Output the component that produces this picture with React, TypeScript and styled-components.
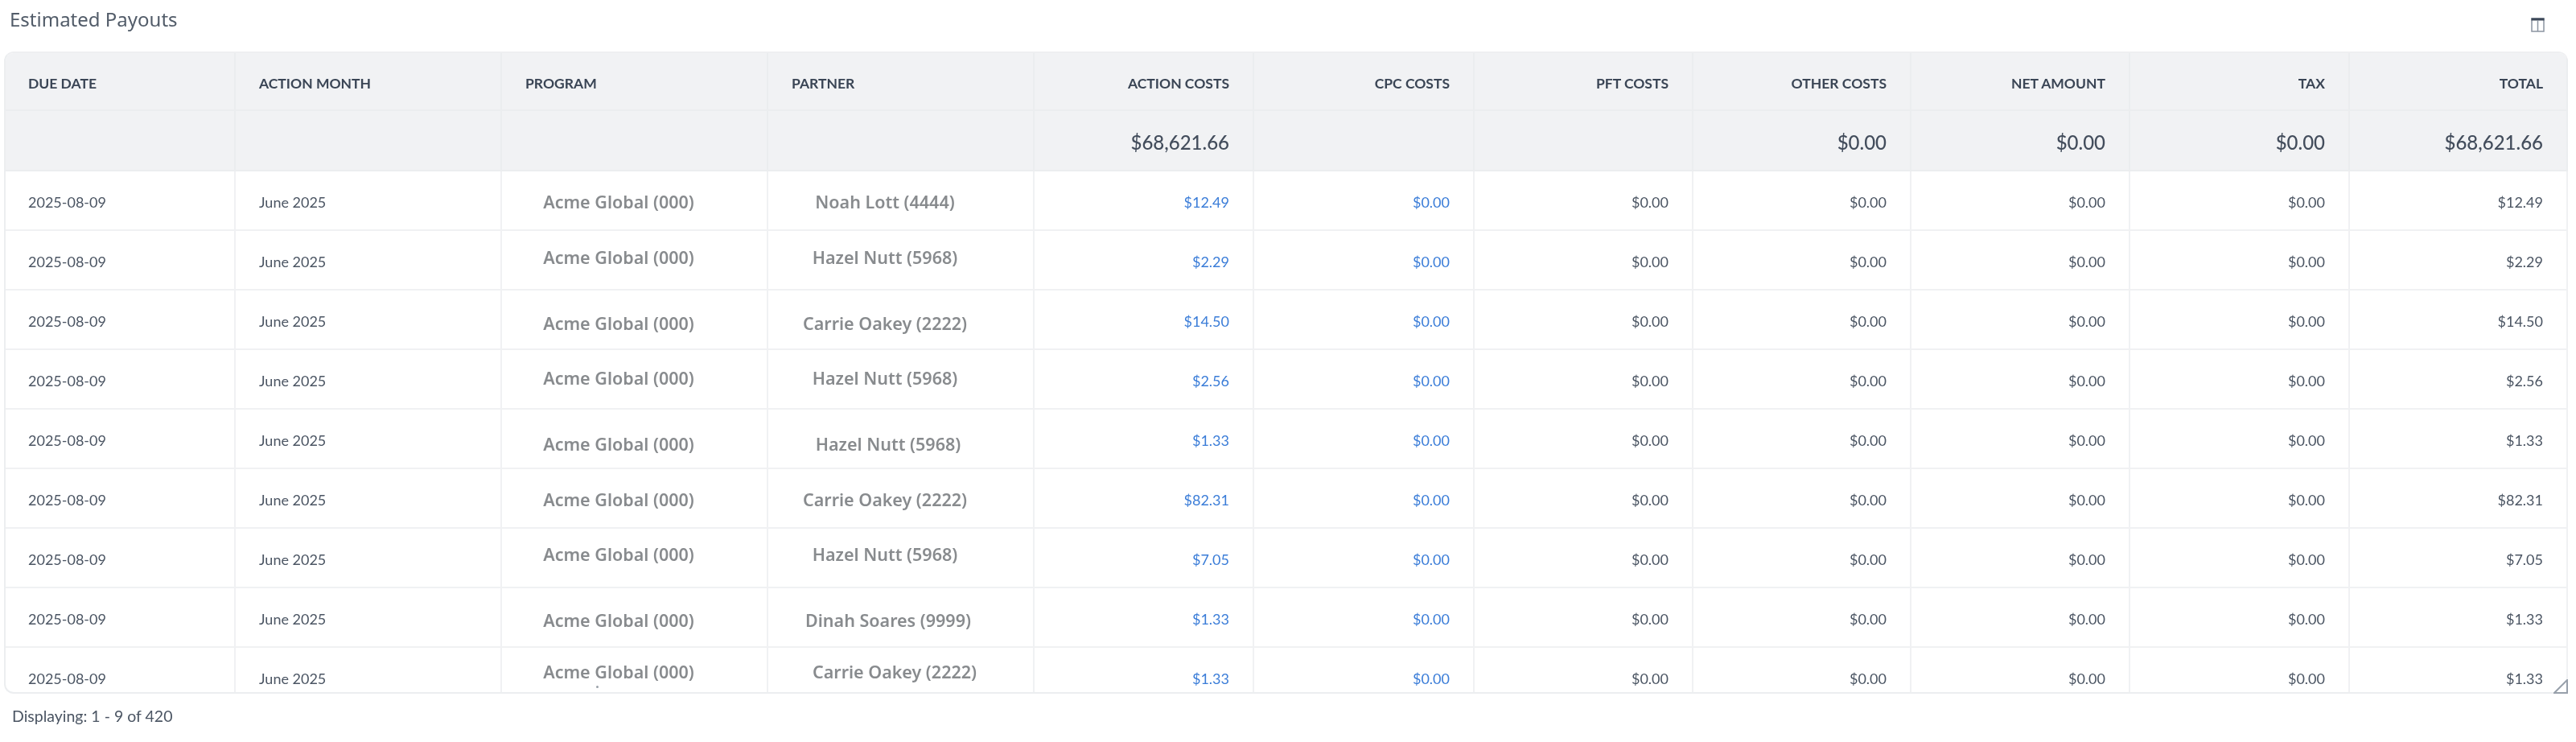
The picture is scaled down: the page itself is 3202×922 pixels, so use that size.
import styled, { createGlobalStyle } from 'styled-components'

interface Row {
  action: string
  total: string
  partner: string
  programOffset: number
  partnerOffset: number
  partnerShift?: number
}

const columns = [
  { label: 'Due Date', width: 286 },
  { label: 'Action Month', width: 331 },
  { label: 'Program', width: 331 },
  { label: 'Partner', width: 331 },
  { label: 'Action Costs', width: 273, numeric: true, sum: '$68,621.66' },
  { label: 'CPC Costs', width: 274, numeric: true },
  { label: 'PFT Costs', width: 272, numeric: true },
  { label: 'Other Costs', width: 271, numeric: true, sum: '$0.00' },
  { label: 'Net Amount', width: 272, numeric: true, sum: '$0.00' },
  { label: 'Tax', width: 273, numeric: true, sum: '$0.00' },
  { label: 'Total', width: 271, numeric: true, sum: '$68,621.66' },
]

const rows: Row[] = [
  { action: '$12.49', total: '$12.49', partner: 'Noah Lott (4444)', programOffset: 0, partnerOffset: 0 },
  { action: '$2.29', total: '$2.29', partner: 'Hazel Nutt (5968)', programOffset: -5, partnerOffset: -5 },
  { action: '$14.50', total: '$14.50', partner: 'Carrie Oakey (2222)', programOffset: 3, partnerOffset: 3 },
  { action: '$2.56', total: '$2.56', partner: 'Hazel Nutt (5968)', programOffset: -3, partnerOffset: -3 },
  { action: '$1.33', total: '$1.33', partner: 'Hazel Nutt (5968)', programOffset: 5, partnerOffset: 5, partnerShift: 4 },
  { action: '$82.31', total: '$82.31', partner: 'Carrie Oakey (2222)', programOffset: 0, partnerOffset: 0 },
  { action: '$7.05', total: '$7.05', partner: 'Hazel Nutt (5968)', programOffset: -6, partnerOffset: -6 },
  { action: '$1.33', total: '$1.33', partner: 'Dinah Soares (9999)', programOffset: 2, partnerOffset: 2, partnerShift: 4 },
  { action: '$1.33', total: '$1.33', partner: 'Carrie Oakey (2222)', programOffset: -8, partnerOffset: -8, partnerShift: 12 },
]

export default function App() {
  return (
    <Page>
      <GlobalStyle />
      <TitleBar>
        <Title>Estimated Payouts</Title>
        <ColumnsIcon width="17" height="18" viewBox="0 0 17 18">
          <rect x="1" y="1" width="15" height="16" fill="#fff" stroke="#8b94a1" strokeWidth="1.5" />
          <rect x="0.5" y="0.5" width="16" height="3" fill="#3d4859" />
          <line x1="8.5" y1="3" x2="8.5" y2="17" stroke="#8b94a1" strokeWidth="1.5" />
        </ColumnsIcon>
      </TitleBar>
      <Frame>
        <Scroller>
          <Table>
            <colgroup>
              {columns.map(({ label, width }) => (
                <col key={label} width={width} />
              ))}
            </colgroup>
            <thead>
              <tr>
                {columns.map(({ label, numeric }) => (
                  <HeadCell key={label} $numeric={numeric}>
                    {label}
                  </HeadCell>
                ))}
              </tr>
              <tr>
                {columns.map(({ label, sum }) => (
                  <SumCell key={label}>{sum}</SumCell>
                ))}
              </tr>
            </thead>
            <tbody>
              {rows.map((row, i) => (
                <tr key={i}>
                  <DataCell>2025-08-09</DataCell>
                  <DataCell>June 2025</DataCell>
                  <NameCell $offset={row.programOffset}>Acme Global (000)</NameCell>
                  <NameCell $offset={row.partnerOffset} $shift={row.partnerShift}>
                    {row.partner}
                  </NameCell>
                  <DataCell $numeric $link>
                    {row.action}
                  </DataCell>
                  <DataCell $numeric $link>
                    $0.00
                  </DataCell>
                  <DataCell $numeric>$0.00</DataCell>
                  <DataCell $numeric>$0.00</DataCell>
                  <DataCell $numeric>$0.00</DataCell>
                  <DataCell $numeric>$0.00</DataCell>
                  <DataCell $numeric>{row.total}</DataCell>
                </tr>
              ))}
            </tbody>
          </Table>
        </Scroller>
        <Speck />
        <ResizeHandle width="18" height="18" viewBox="0 0 18 18">
          <path d="M1 17 L17 1 L17 17 Z" fill="none" stroke="#98a0ab" strokeWidth="2" />
        </ResizeHandle>
      </Frame>
      <Footer>Displaying: 1 - 9 of 420</Footer>
    </Page>
  )
}

const GlobalStyle = createGlobalStyle`
  body {
    margin: 0;
    background: #fff;
    overflow: hidden;
    font-family: Lato, "Liberation Sans", sans-serif;
  }
`

const Page = styled.div`
  height: 922px;
  padding: 0 10px 0 5px;
  box-sizing: border-box;
  filter: blur(0.6px);
`

const TitleBar = styled.div`
  display: flex;
  justify-content: space-between;
  align-items: flex-start;
  height: 64px;
  padding: 7px 29px 0 7px;
  box-sizing: border-box;
`

const Title = styled.div`
  font-family: "Noto Sans", sans-serif;
  font-size: 24px;
  line-height: 34px;
  color: #525c69;
`

const ColumnsIcon = styled.svg`
  margin-top: 15px;
`

const Frame = styled.div`
  position: relative;
  height: 798px;
`

const Scroller = styled.div`
  height: 100%;
  box-sizing: border-box;
  overflow: hidden;
  border-radius: 12px 12px 0 12px;
  border-top: 2px solid #eeeff1;
  border-left: 2px solid #eceef0;
  border-bottom: 2px solid #eceef0;
`

const Table = styled.table`
  width: 3185px;
  table-layout: fixed;
  border-collapse: separate;
  border-spacing: 0;
`

const Cell = styled.td<{ $numeric?: boolean }>`
  height: 74px;
  box-sizing: border-box;
  padding: 4px 29px 0 29px;
  border-right: 2px solid #f0f1f3;
  border-bottom: 2px solid #f0f1f3;
  text-align: ${({ $numeric }) => ($numeric ? 'right' : 'left')};
  white-space: nowrap;

  &:first-child {
    padding-left: 28px;
  }
`

const HeadCell = styled(Cell).attrs({ as: 'th' })`
  height: 72px;
  background: #f1f2f4;
  border-color: #ebedef;
  color: #3a4555;
  font-size: 17.5px;
  font-weight: 700;
  text-transform: uppercase;
`

const SumCell = styled(Cell)`
  height: 75px;
  background: #f1f2f4;
  border-color: #ebedef;
  color: #434d5c;
  font-size: 24px;
  font-weight: 500;
  text-align: right;
`

const DataCell = styled(Cell)<{ $link?: boolean }>`
  color: ${({ $link }) => ($link ? '#3b7dd8' : '#4b5563')};
  font-size: 18px;
`

const NameCell = styled(Cell)<{ $offset: number; $shift?: number }>`
  padding: ${({ $offset }) => 3 + Math.max($offset, 0) * 2}px 39px
    ${({ $offset }) => Math.max(-$offset, 0) * 2}px
    ${({ $shift = 0 }) => $shift * 2}px;
  text-align: center;
  font-family: "Noto Sans", sans-serif;
  font-size: 21.5px;
  font-weight: 600;
  color: #888b8e;
`

const Speck = styled.span`
  position: absolute;
  left: 736px;
  top: 788px;
  width: 3px;
  height: 3px;
  border-radius: 50%;
  background: #9aa0a8;
`

const ResizeHandle = styled.svg`
  position: absolute;
  right: 0;
  bottom: 0;
`

const Footer = styled.div`
  padding: 16px 10px 0;
  font-size: 19.5px;
  line-height: 24px;
  color: #4b5563;
`
